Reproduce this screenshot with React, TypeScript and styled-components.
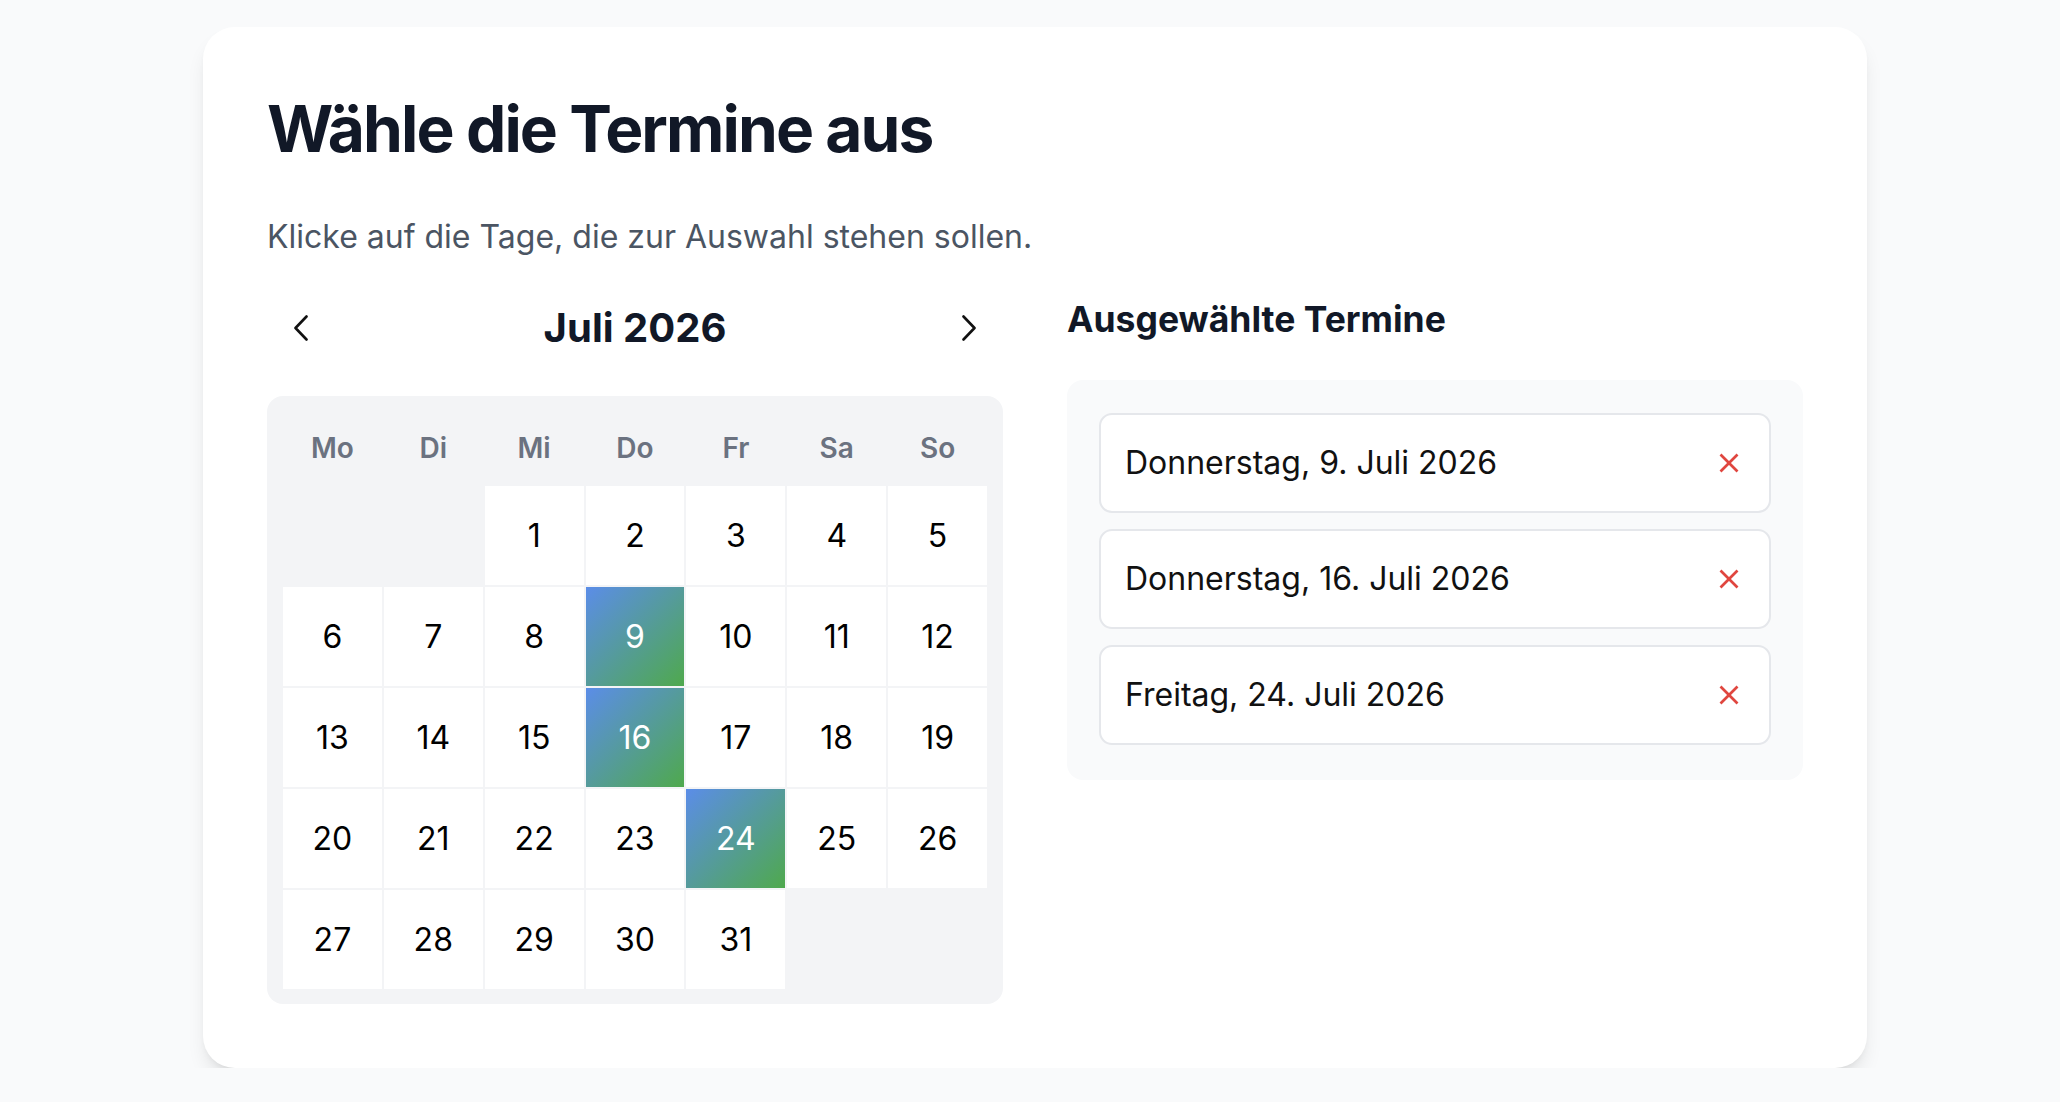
import React, { useState } from 'react';
import styled, { createGlobalStyle } from 'styled-components';

const GlobalStyle = createGlobalStyle`
  html, body {
    margin: 0;
    padding: 0;
    background: #f9fafb;
  }
  body {
    font-family: Inter, "Noto Sans", "Liberation Sans", sans-serif;
    color: #111827;
  }
  *, *::before, *::after { box-sizing: border-box; }
`;

const Page = styled.div`
  display: flex;
  justify-content: center;
  padding: 27px 0 0 10px;
`;

const Card = styled.main`
  width: 1664px;
  background: #ffffff;
  border-radius: 32px;
  padding: 64px;
  box-shadow: 0 13px 20px -4px rgba(0, 0, 0, 0.1), 0 5px 8px -5px rgba(0, 0, 0, 0.1);
`;

const Title = styled.h1`
  margin: 0;
  font-size: 64px;
  line-height: 1.2;
  font-weight: 700;
  letter-spacing: -1.9px;
  color: #111827;
`;

const Subtitle = styled.p`
  margin: 45px 0 0;
  font-size: 32px;
  line-height: 48px;
  color: #4b5563;
`;

const Columns = styled.div`
  display: grid;
  grid-template-columns: 1fr 1fr;
  column-gap: 64px;
  margin-top: 35px;
`;

const Column = styled.section`
  display: flex;
  flex-direction: column;
  min-width: 0;
`;

const CalendarHeader = styled.div`
  display: flex;
  align-items: center;
  justify-content: space-between;
  height: 64px;
  margin-bottom: 36px;
`;

const NavButton = styled.button`
  width: 68px;
  height: 64px;
  display: flex;
  align-items: center;
  justify-content: center;
  padding: 0;
  border: none;
  background: none;
  color: #111111;
  cursor: pointer;
`;

const MonthLabel = styled.h2`
  margin: 0;
  font-size: 40px;
  line-height: 1;
  font-weight: 700;
  color: #111827;
`;

const CalendarGrid = styled.div`
  display: grid;
  grid-template-columns: repeat(7, 1fr);
  grid-template-rows: 72px repeat(5, 99px);
  gap: 2px;
  padding: 16px 16px 15px;
  background: #f3f4f6;
  border-radius: 16px;
`;

const Weekday = styled.div`
  display: flex;
  align-items: center;
  justify-content: center;
  font-size: 28px;
  font-weight: 600;
  color: #6b7280;
`;

const DayCell = styled.button<{ $selected: boolean }>`
  display: flex;
  align-items: center;
  justify-content: center;
  padding: 0;
  border: none;
  font-family: inherit;
  font-size: 32px;
  font-weight: 400;
  cursor: pointer;
  color: ${(p) => (p.$selected ? '#ffffff' : '#000000')};
  background: ${(p) =>
    p.$selected ? 'linear-gradient(135deg, #5b8de8 0%, #4fa94d 100%)' : '#ffffff'};
`;

const EmptyCell = styled.div``;

const SectionTitle = styled.h2`
  margin: 0 0 36px;
  font-size: 35.5px;
  line-height: 48px;
  font-weight: 700;
  color: #111827;
`;

const Panel = styled.div`
  display: flex;
  flex-direction: column;
  gap: 16px;
  padding: 33px 32px 35px;
  background: #f9fafb;
  border-radius: 16px;
`;

const Item = styled.div`
  display: flex;
  align-items: center;
  justify-content: space-between;
  height: 100px;
  padding: 0 30px 0 24px;
  background: #ffffff;
  border: 2px solid #e5e7eb;
  border-radius: 13px;
  font-size: 32px;
  color: #111111;
`;

const RemoveButton = styled.button`
  display: flex;
  align-items: center;
  justify-content: center;
  padding: 0;
  border: none;
  background: none;
  cursor: pointer;
`;

const ChevronLeft = () => (
  <svg width="16" height="26" viewBox="0 0 16 26" fill="none">
    <polyline points="13.5,1.5 2.5,13 13.5,24.5" stroke="currentColor" strokeWidth="2.6" strokeLinecap="round" strokeLinejoin="round" />
  </svg>
);

const ChevronRight = () => (
  <svg width="16" height="26" viewBox="0 0 16 26" fill="none">
    <polyline points="2.5,1.5 13.5,13 2.5,24.5" stroke="currentColor" strokeWidth="2.6" strokeLinecap="round" strokeLinejoin="round" />
  </svg>
);

const CloseIcon = () => (
  <svg width="20" height="20" viewBox="0 0 20 20" fill="none">
    <line x1="1.5" y1="1.5" x2="18.5" y2="18.5" stroke="#e0463f" strokeWidth="2.6" />
    <line x1="18.5" y1="1.5" x2="1.5" y2="18.5" stroke="#e0463f" strokeWidth="2.6" />
  </svg>
);

const WEEKDAYS = ['Mo', 'Di', 'Mi', 'Do', 'Fr', 'Sa', 'So'];
const DAY_NAMES = ['Sonntag', 'Montag', 'Dienstag', 'Mittwoch', 'Donnerstag', 'Freitag', 'Samstag'];

export default function App() {
  const [selected, setSelected] = useState<number[]>([9, 16, 24]);
  const year = 2026;
  const month = 6; // Juli
  const first = new Date(year, month, 1).getDay();
  const offset = (first + 6) % 7;
  const daysInMonth = new Date(year, month + 1, 0).getDate();
  const cells: (number | null)[] = [];
  for (let i = 0; i < offset; i++) cells.push(null);
  for (let d = 1; d <= daysInMonth; d++) cells.push(d);
  while (cells.length % 7 !== 0) cells.push(null);

  const toggle = (d: number) =>
    setSelected((s) => (s.includes(d) ? s.filter((x) => x !== d) : [...s, d].sort((a, b) => a - b)));

  return (
    <>
      <GlobalStyle />
      <Page>
        <Card>
          <Title>Wähle die Termine aus</Title>
          <Subtitle>Klicke auf die Tage, die zur Auswahl stehen sollen.</Subtitle>
          <Columns>
            <Column>
              <CalendarHeader>
                <NavButton aria-label="Vorheriger Monat">
                  <ChevronLeft />
                </NavButton>
                <MonthLabel>Juli 2026</MonthLabel>
                <NavButton aria-label="Nächster Monat">
                  <ChevronRight />
                </NavButton>
              </CalendarHeader>
              <CalendarGrid>
                {WEEKDAYS.map((w) => (
                  <Weekday key={w}>{w}</Weekday>
                ))}
                {cells.map((d, i) =>
                  d === null ? (
                    <EmptyCell key={`e${i}`} />
                  ) : (
                    <DayCell key={d} $selected={selected.includes(d)} onClick={() => toggle(d)}>
                      {d}
                    </DayCell>
                  )
                )}
              </CalendarGrid>
            </Column>
            <Column>
              <SectionTitle>Ausgewählte Termine</SectionTitle>
              <Panel>
                {selected.map((d) => (
                  <Item key={d}>
                    <span>
                      {DAY_NAMES[new Date(year, month, d).getDay()]}, {d}. Juli {year}
                    </span>
                    <RemoveButton aria-label="Entfernen" onClick={() => toggle(d)}>
                      <CloseIcon />
                    </RemoveButton>
                  </Item>
                ))}
              </Panel>
            </Column>
          </Columns>
        </Card>
      </Page>
    </>
  );
}
